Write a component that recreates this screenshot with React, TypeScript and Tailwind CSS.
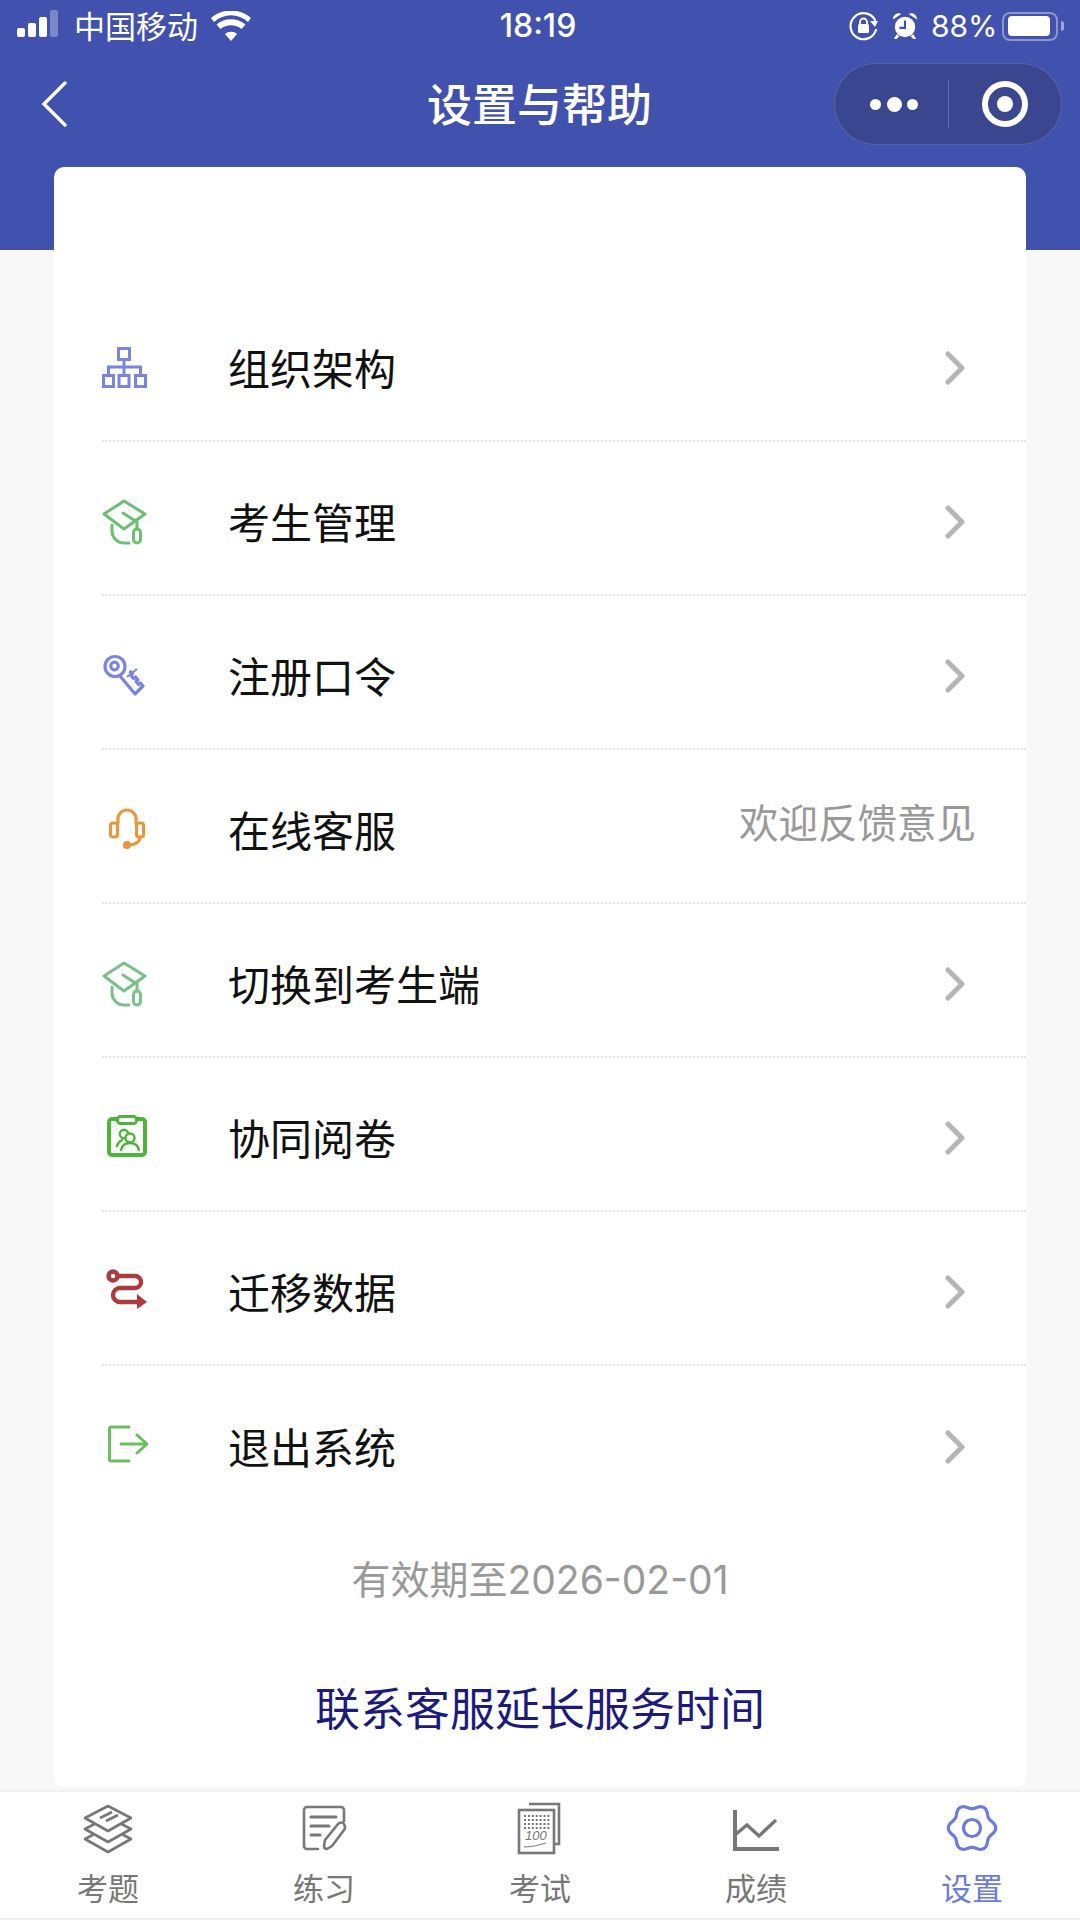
import type { ReactNode } from 'react';

const BLUE = '#7b84e3';
const GREEN = '#6cbf73';

function OrgIcon() {
  return (
    <svg width="46" height="46" viewBox="0 0 46 46" fill="none" stroke={BLUE} strokeWidth="3">
      <rect x="16.5" y="3.5" width="11" height="11" />
      <rect x="1.5" y="30.5" width="10" height="11" />
      <rect x="17" y="30.5" width="10" height="11" />
      <rect x="33.500" y="30.5" width="10" height="11" />
      <path d="M22 15v15M6.5 30v-8h32v8" />
    </svg>
  );
}

function CapIcon({ color = GREEN }: { color?: string }) {
  return (
    <svg width="46" height="46" viewBox="0 0 46 46" fill="none" stroke={color} strokeWidth="3" strokeLinejoin="round" strokeLinecap="round">
      <path d="M2 15 22 2l21 13-21 15z" />
      <path d="M21 14l14 9v7" />
      <rect x="31.5" y="30" width="7" height="14" rx="3.5" />
      <path d="M10 26v6a12 12 0 0 0 12 12h5" />
    </svg>
  );
}

function KeyIcon() {
  return (
    <svg width="46" height="46" viewBox="0 0 46 46" fill="none" stroke={BLUE} strokeWidth="3.2" strokeLinejoin="round">
      <circle cx="13" cy="13.5" r="10" />
      <circle cx="12.5" cy="13" r="3.8" />
      <path d="M18 23 33 41l8-8-2.500-3-2 1.500-2.500-3 2-1.500-2.500-3-2 1.500-2.500-3 1.500-2-3-2.500" />
      <path d="M25 24l10-8" strokeWidth="2" />
    </svg>
  );
}

function HeadsetIcon() {
  return (
    <svg width="46" height="46" viewBox="0 0 46 46" fill="none" stroke="#e8973f" strokeWidth="3.2" strokeLinecap="round">
      <path d="M16 16v-3a9 9 0 0 1 9-10 9 9 0 0 1 9 10v3" />
      <rect x="8.5" y="16" width="7" height="14" rx="2.5" />
      <rect x="34.5" y="16" width="7" height="14" rx="2.5" />
      <path d="M38 30c0 5-5 8-12 8" />
      <circle cx="25" cy="38" r="2.5" fill="#e8973f" />
    </svg>
  );
}

function ClipboardIcon() {
  return (
    <svg width="46" height="46" viewBox="0 0 46 46" fill="none" stroke="#4fb43a" strokeLinejoin="round">
      <rect x="7" y="4" width="36" height="36" rx="3" strokeWidth="4" />
      <rect x="15.500" y="1.500" width="19" height="7" rx="3" strokeWidth="3" fill="#fff" />
      <circle cx="22" cy="19" r="4.200" strokeWidth="2.400" />
      <circle cx="28" cy="23" r="4.500" strokeWidth="2.400" fill="#fff" />
      <path d="M15 31c1-4 3-5 5-6M19 35c1-5 4-7 9-7s8 2 9 7" strokeWidth="2.400" strokeLinecap="round" />
    </svg>
  );
}

function RouteIcon() {
  return (
    <svg width="46" height="46" viewBox="0 0 46 46" fill="none" stroke="#ab3b3e" strokeWidth="4.4" strokeLinecap="round">
      <circle cx="11" cy="7" r="4.500" />
      <path d="M16 7h17a6 6 0 0 1 0 12H18a7 7 0 0 0 0 14h20" />
      <path d="M35 25l10 8-10 7z" fill="#ab3b3e" stroke="none" />
    </svg>
  );
}

function LogoutIcon() {
  return (
    <svg width="46" height="46" viewBox="0 0 46 46" fill="none" stroke="#6cbf5f" strokeWidth="3" strokeLinecap="round" strokeLinejoin="round">
      <path d="M27 3H9a1.500 1.500 0 0 0-1.500 1.500v31A1.500 1.500 0 0 0 9 37h18" />
      <path d="M19 20h26M35 11l10 9-10 9" />
    </svg>
  );
}

function Chevron() {
  return (
    <svg width="24" height="36" viewBox="0 0 24 36" fill="none" stroke="#b5b5b5" strokeWidth="5" strokeLinecap="round" strokeLinejoin="round">
      <path d="M7 4l14 14L7 32" />
    </svg>
  );
}

function LayersIcon() {
  return (
    <svg width="54" height="54" viewBox="0 0 54 54" fill="none" stroke="#777" strokeWidth="2.600" strokeLinejoin="round">
      <path d="M4 38l23-12 23 12-23 13z" />
      <path d="M4 28l23-12 23 12-23 13z" fill="#fff" />
      <path d="M4 17 27 5l23 12-23 13z" fill="#fff" />
      <path d="M19 17l12-6M25 20l12-6" />
    </svg>
  );
}

function NoteIcon() {
  return (
    <svg width="54" height="54" viewBox="0 0 54 54" fill="none" stroke="#777" strokeWidth="2.600" strokeLinecap="round" strokeLinejoin="round">
      <path d="M47 20V9a3 3 0 0 0-3-3H10a3 3 0 0 0-3 3v36a3 3 0 0 0 3 3h11" />
      <path d="M14 16h25M14 25h18M14 34h9" strokeWidth="3" />
      <path d="M30 48c-2 0-3-1-3-3l1-6 13-16c2-2 5-2 6 0s2 4 0 6L35 45z" />
    </svg>
  );
}

function ExamIcon() {
  const dots = [];
  for (let r = 0; r < 4; r++) {
    for (let c = 0; c < 7; c++) {
      dots.push(<rect key={`${r}-${c}`} x={13 + c * 3.9} y={14 + r * 4} width="2" height="2" fill="#777" stroke="none" />);
    }
  }
  return (
    <svg width="54" height="54" viewBox="0 0 54 54" fill="none" stroke="#777" strokeWidth="2.600">
      <g transform="translate(-2 0)">
        <path d="M18 3h30v40h-5" />
        <rect x="8" y="9" width="35" height="43" />
        {dots}
        <text x="14" y="39" fontSize="13" fontStyle="italic" fill="#777" stroke="none" fontFamily="Liberation Sans, sans-serif">100</text>
        <path d="M13 46c8 0 15-2 22-4" strokeWidth="1" />
      </g>
    </svg>
  );
}

function ChartIcon() {
  return (
    <svg width="54" height="54" viewBox="0 0 54 54" fill="none" stroke="#777" strokeWidth="4">
      <path d="M6 9v39h44" />
      <path d="M7 33l11-9 12 11 17-16" strokeWidth="3.400" />
    </svg>
  );
}

// six rounded lobes, dip at top and bottom
function gearPath() {
  const pts: string[] = [];
  for (let i = 0; i < 120; i++) {
    const t = (i / 120) * Math.PI * 2;
    const r = 21.5 + 2.2 * Math.cos(6 * t);
    pts.push(`${(27 + r * Math.cos(t)).toFixed(2)} ${(27 + r * Math.sin(t)).toFixed(2)}`);
  }
  return `M${pts.join('L')}Z`;
}

function GearIcon() {
  return (
    <svg width="54" height="54" viewBox="0 0 54 54" fill="none" stroke="#6c7be0" strokeWidth="3.200" strokeLinejoin="round">
      <path d={gearPath()} />
      <circle cx="27" cy="27" r="8.500" />
    </svg>
  );
}

function StatusBar() {
  return (
    <div className="flex h-[52px] items-center text-white">
      <div className="ml-[17px] flex h-[28px] w-[45px] items-end gap-[3px] pb-[3px]">
        <div className="h-[9px] w-[8px] rounded-[2px] bg-white" />
        <div className="h-[14px] w-[8px] rounded-[2px] bg-white" />
        <div className="h-[20px] w-[8px] rounded-[2px] bg-white" />
        <div className="h-[27px] w-[8px] rounded-[2px] bg-white/30" />
      </div>
      <span className="ml-[12px] w-[124px] whitespace-nowrap text-[31px] leading-none">中国移动</span>
      <svg className="ml-[13px]" width="40" height="30" viewBox="0 0 40 30" fill="#fff">
        <path d="M20 30l-6-7c3-3 9-3 12 0z" />
        <path d="M9.500 18l-4-4.500c8-7 21-7 29 0l-4 4.500c-6-5-15-5-21 0z" />
        <path d="M3 11 0 7c11-10 29-10 40 0l-3 4C27 2 13 2 3 11z" />
      </svg>
      <span className="ml-[246px] w-[82px] text-center text-[32px] font-medium leading-none">18:19</span>
      <svg className="ml-[270px]" width="30" height="30" viewBox="0 0 30 30" fill="none" stroke="#fff" strokeWidth="2.200">
        <path d="M26 9a13 13 0 1 0 1 10" strokeLinecap="round" />
        <path d="M29 10h-8l5 6z" fill="#fff" stroke="none" />
        <rect x="9" y="13" width="11" height="9" rx="1.500" fill="#fff" stroke="none" />
        <path d="M11 13v-2a3.500 3.500 0 0 1 7 0v2" strokeWidth="1.800" />
      </svg>
      <svg className="ml-[13px]" width="26" height="30" viewBox="0 0 28 30" fill="#fff">
        <circle cx="14" cy="16" r="11" />
        <path d="M1 8c0-5 5-8 9-6zM27 8c0-5-5-8-9-6zM5 24l-3 5h3l3-3zM23 24l3 5h-3l-3-3z" />
        <path d="M14 9v8H8" stroke="#4152ae" strokeWidth="2.200" fill="none" />
      </svg>
      <span className="ml-[13px] w-[64px] whitespace-nowrap text-[30px] leading-none">88%</span>
      <div className="ml-[7px] flex h-[29px] w-[56px] items-center rounded-[8px] border-2 border-white/40 px-[4px]">
        <div className="h-[20px] w-[42px] rounded-[4px] bg-white" />
      </div>
      <div className="ml-[3px] h-[10px] w-[3px] rounded-r-sm bg-white/50" />
    </div>
  );
}

function NavBar() {
  return (
    <div className="mt-[11px] flex h-[82px] items-center text-white">
      <svg className="ml-[41px]" width="26" height="46" viewBox="0 0 26 46" fill="none" stroke="#fff" strokeWidth="3.400" strokeLinecap="round">
        <path d="M24 2 3 23l21 21" />
      </svg>
      <span className="ml-[360px] w-[222px] whitespace-nowrap pt-[2px] text-center text-[45px] font-medium leading-none">设置与帮助</span>
      <div className="ml-[185px] flex h-[82px] w-[228px] items-center rounded-full border border-white/15 bg-[#3a468f]">
        <div className="ml-[35px] flex w-[48px] items-center justify-between">
          <div className="h-[11px] w-[11px] rounded-full bg-white" />
          <div className="h-[15px] w-[15px] rounded-full bg-white" />
          <div className="h-[11px] w-[11px] rounded-full bg-white" />
        </div>
        <div className="ml-[30px] h-[48px] w-px bg-white/20" />
        <div className="ml-[33px] flex h-[46px] w-[46px] items-center justify-center rounded-full border-[6px] border-white">
          <div className="h-[16px] w-[16px] rounded-full bg-white" />
        </div>
      </div>
    </div>
  );
}

const rows: { icon: ReactNode; label: string; note?: string }[] = [
  { icon: <OrgIcon />, label: '组织架构' },
  { icon: <CapIcon />, label: '考生管理' },
  { icon: <KeyIcon />, label: '注册口令' },
  { icon: <HeadsetIcon />, label: '在线客服', note: '欢迎反馈意见' },
  { icon: <CapIcon color="#78c18a" />, label: '切换到考生端' },
  { icon: <ClipboardIcon />, label: '协同阅卷' },
  { icon: <RouteIcon />, label: '迁移数据' },
  { icon: <LogoutIcon />, label: '退出系统' },
];

const tabs: { icon: ReactNode; label: string; active?: boolean }[] = [
  { icon: <LayersIcon />, label: '考题' },
  { icon: <NoteIcon />, label: '练习' },
  { icon: <ExamIcon />, label: '考试' },
  { icon: <ChartIcon />, label: '成绩' },
  { icon: <GearIcon />, label: '设置', active: true },
];

export default function App() {
  return (
    <div className="flex h-[1920px] w-[1080px] flex-col overflow-hidden bg-[#f8f8f8] font-[Inter,'Noto_Sans_CJK_SC',sans-serif]">
      <div className="h-[250px] shrink-0 bg-[#4152ae]">
        <StatusBar />
        <NavBar />
      </div>

      <div className="mx-[54px] -mt-[83px] flex h-[1620px] shrink-0 flex-col rounded-[10px] bg-white pt-[121px]">
        {rows.map((row, i) => (
          <div
            key={row.label}
            className={`ml-[48px] flex h-[154px] shrink-0 items-center pt-[8px] ${i < rows.length - 1 ? 'border-b-2 border-dotted border-[#e4e4e4]' : ''}`}
          >
            <div className="h-[46px] w-[46px] shrink-0">{row.icon}</div>
            <span className="ml-[80px] pt-[3px] text-[42px] leading-none text-[#111]">{row.label}</span>
            {row.note ? (
              <span className="ml-auto mr-[50px] -translate-y-[5px] text-[39.5px] leading-none text-[#999]">{row.note}</span>
            ) : (
              <div className="ml-auto mr-[61px] h-[36px] w-[24px]"><Chevron /></div>
            )}
          </div>
        ))}
        <div className="mt-[40px] text-center text-[39px] leading-none text-[#999]">有效期至2026-02-01</div>
        <div className="mt-[88px] text-center text-[45px] leading-none text-[#1c1a7e]">联系客服延长服务时间</div>
      </div>

      <div className="mt-[3px] grid h-[130px] shrink-0 grid-cols-5 border-y-2 border-[#f0f0f0] bg-white">
        {tabs.map(tab => (
          <div key={tab.label} className="flex flex-col items-center pt-[9px]">
            <div className="h-[54px] w-[54px]">{tab.icon}</div>
            <span className={`mt-[16px] text-[31px] leading-[36px] ${tab.active ? 'text-[#6c7be0]' : 'text-[#777]'}`}>{tab.label}</span>
          </div>
        ))}
      </div>
    </div>
  );
}
